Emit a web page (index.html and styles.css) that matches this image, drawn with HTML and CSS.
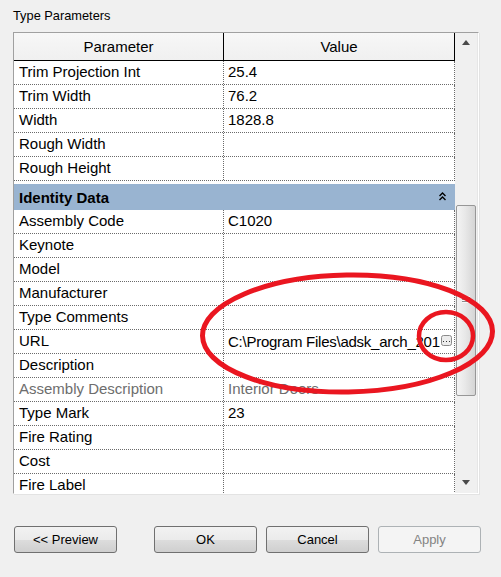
FILE: index.html
```html
<!DOCTYPE html>
<html lang="en">
<head>
    <meta charset="UTF-8">
    <title>Type Parameters</title>
    <link rel="stylesheet" href="styles.css">
</head>
<body>
    <div class="dialog">
        <div class="title">Type Parameters</div>

        <div class="frame">
            <div class="grid">
                <div class="head">
                    <div class="hcell">Parameter</div>
                    <div class="hcell">Value</div>
                </div>

                <div class="row"><div class="cell">Trim Projection Int</div><div class="cell">25.4</div></div>
                <div class="row"><div class="cell">Trim Width</div><div class="cell">76.2</div></div>
                <div class="row"><div class="cell">Width</div><div class="cell">1828.8</div></div>
                <div class="row"><div class="cell">Rough Width</div><div class="cell"></div></div>
                <div class="row"><div class="cell">Rough Height</div><div class="cell"></div></div>

                <!-- group header -->
                <div class="group">
                    <span>Identity Data</span>
                    <svg class="collapse" width="7" height="9" viewBox="0 0 7 9">
                        <path d="M0.5 4 L3.5 1 L6.5 4 M0.5 8 L3.5 5 L6.5 8" fill="none" stroke="#000" stroke-width="1.4"/>
                    </svg>
                </div>

                <div class="row"><div class="cell">Assembly Code</div><div class="cell">C1020</div></div>
                <div class="row"><div class="cell">Keynote</div><div class="cell"></div></div>
                <div class="row"><div class="cell">Model</div><div class="cell"></div></div>
                <div class="row"><div class="cell">Manufacturer</div><div class="cell"></div></div>
                <div class="row"><div class="cell">Type Comments</div><div class="cell"></div></div>
                <div class="row">
                    <div class="cell">URL</div>
                    <div class="cell url">
                        <span class="url-text">C:\Program Files\adsk_arch_2013\index.htm</span>
                        <svg class="browse" width="11" height="11" viewBox="0 0 11 11">
                            <rect x="0.5" y="0.5" width="10" height="10" rx="2" fill="#ececec" stroke="#8a8a8a"/>
                            <rect x="2" y="6" width="1" height="1" fill="#333"/>
                            <rect x="5" y="6" width="1" height="1" fill="#333"/>
                            <rect x="8" y="6" width="1" height="1" fill="#333"/>
                        </svg>
                    </div>
                </div>
                <div class="row"><div class="cell">Description</div><div class="cell"></div></div>
                <div class="row muted"><div class="cell">Assembly Description</div><div class="cell">Interior Doors</div></div>
                <div class="row"><div class="cell">Type Mark</div><div class="cell">23</div></div>
                <div class="row"><div class="cell">Fire Rating</div><div class="cell"></div></div>
                <div class="row"><div class="cell">Cost</div><div class="cell"></div></div>
                <div class="row"><div class="cell">Fire Label</div><div class="cell"></div></div>
            </div>

            <div class="scrollbar">
                <div class="arrow up"></div>
                <div class="track">
                    <div class="thumb">
                        <div class="grip"></div>
                    </div>
                </div>
                <div class="arrow down"></div>
            </div>
        </div>

        <div class="buttons">
            <button class="btn preview">&lt;&lt; Preview</button>
            <button class="btn ok">OK</button>
            <button class="btn">Cancel</button>
            <button class="btn" disabled>Apply</button>
        </div>
    </div>

    <!-- red annotation marks -->
    <svg class="marks" width="501" height="577" viewBox="0 0 501 577">
        <ellipse cx="347.5" cy="333.5" rx="145" ry="58.5" fill="none" stroke="#ea1620" stroke-width="5" transform="rotate(-1 347.5 333.5)"/>
        <ellipse cx="446" cy="336" rx="27" ry="24" fill="none" stroke="#ea1620" stroke-width="4.5"/>
    </svg>
</body>
</html>
```

FILE: styles.css
```css
body {
    margin: 0;
    background-color: #f0f0f0;
    font-family: 'Liberation Sans', Arial, sans-serif;
    color: #000;
}

.dialog {
    width: 501px;
    height: 577px;
}

.title {
    font-size: 12.8px;
    line-height: 16px;
    padding: 8px 0 0 13px;
    height: 16px;
}

.frame {
    display: flex;
    margin: 8px 0 0 13px;
    width: 464px;
    height: 460px;
    border-top: 1px solid #a0a0a0;
    border-left: 1px solid #a0a0a0;
    border-right: 1px solid #fff;
    border-bottom: 1px solid #fff;
    box-shadow: 1px 1px 0 #e3e3e3;
}

.grid {
    width: 442px;
    height: 460px;
    overflow: hidden;
    background-color: #fff;
    font-size: 15px;
}

.head {
    display: grid;
    grid-template-columns: 210px 1fr;
    height: 27px;
    background: linear-gradient(#f7f7f7, #f0f0f0);
    border-bottom: 1px solid #000;
    border-right: 1px solid #000;
}

.hcell {
    text-align: center;
    line-height: 27px;
}

.hcell:first-child {
    border-right: 1px solid #000;
}

.row {
    display: grid;
    grid-template-columns: 210px 1fr;
    height: 24px;
    box-sizing: border-box;
    border-bottom: 1px dotted #6a6a6a;
    border-right: 1px dotted #6a6a6a;
}

.cell {
    line-height: 22px;
    padding-left: 5px;
    white-space: nowrap;
    overflow: hidden;
}

.cell:first-child {
    border-right: 1px dotted #6a6a6a;
}

.cell + .cell {
    padding-left: 4px;
}

.muted .cell {
    color: #6d6d6d;
}

.url {
    display: flex;
    align-items: center;
    padding-right: 2px;
}

.url-text {
    flex: 1;
    overflow: hidden;
    line-height: 22px;
    letter-spacing: -0.25px;
}

.browse {
    flex: none;
    margin-left: 1px;
    margin-bottom: 2px;
}

.group {
    display: flex;
    justify-content: space-between;
    align-items: center;
    margin-top: 3px;
    height: 26px;
    padding: 0 9px 0 5px;
    background-color: #99b4d1;
    font-weight: bold;
}

.collapse {
    margin-bottom: 2px;
}

.scrollbar {
    display: flex;
    flex-direction: column;
    width: 21px;
    margin-left: 1px;
    background-color: #f0f0f0;
    border-right: 1px solid #e6e6e6;
}

.arrow {
    height: 20px;
    position: relative;
}

.arrow::after {
    content: '';
    position: absolute;
    left: 6px;
    width: 0;
    height: 0;
    border-left: 4.5px solid transparent;
    border-right: 4.5px solid transparent;
}

.arrow.up::after {
    top: 7px;
    border-bottom: 5px solid #4a4a4a;
}

.arrow.down::after {
    bottom: 8px;
    border-top: 5px solid #4a4a4a;
}

.track {
    flex: 1;
    padding-top: 152px;
}

.thumb {
    height: 189px;
    width: 18px;
    border: 1px solid #979797;
    border-radius: 2px;
    background: linear-gradient(90deg, #f4f4f4, #e8e8e8 45%, #d5d5d5);
    display: flex;
    align-items: center;
    justify-content: center;
}

.grip {
    width: 8px;
    height: 7px;
    margin-top: -2px;
    background: repeating-linear-gradient(#f8f8f8 0 1px, #8c8c8c 1px 2px);
}

.buttons {
    display: flex;
    margin: 32px 0 0 14px;
}

.btn {
    width: 103px;
    height: 27px;
    margin-left: 9px;
    border: 1px solid #707070;
    border-radius: 3px;
    background: linear-gradient(#f2f2f2 0, #ebebeb 50%, #dddddd 50%, #cfcfcf 100%);
    font-family: 'Liberation Sans', Arial, sans-serif;
    font-size: 13px;
    color: #000;
    padding: 0;
}

.btn.preview {
    margin-left: 0;
}

.btn.ok {
    margin-left: 37px;
}

.btn:disabled {
    border-color: #adb2b5;
    background: #f4f4f4;
    color: #838383;
}

.marks {
    position: absolute;
    top: 0;
    left: 0;
    pointer-events: none;
}
```
